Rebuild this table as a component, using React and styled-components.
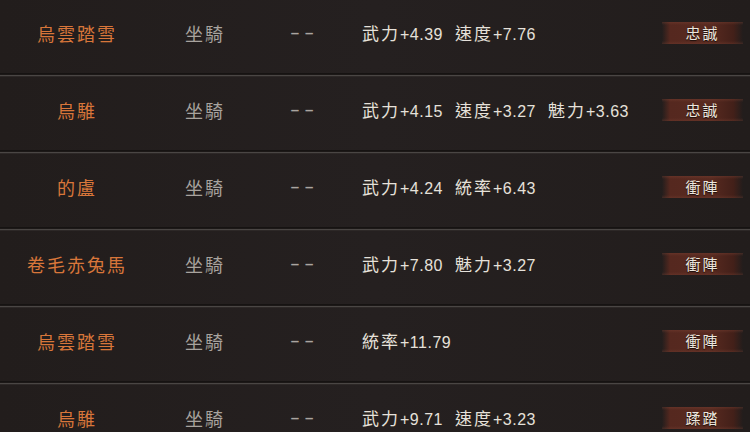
import React from "react";
import styled, { createGlobalStyle } from "styled-components";

const Global = createGlobalStyle`
  html, body { margin: 0; padding: 0; background: #231e1d; }
  body { width: 750px; height: 432px; overflow: hidden; }
`;

const CJK = `"Noto Sans CJK TC", "Noto Sans CJK SC", sans-serif`;
const LATIN = `"Liberation Sans", Arial, "Noto Sans CJK TC", sans-serif`;

const Page = styled.div`
  width: 750px;
  height: 432px;
  overflow: hidden;
  background: linear-gradient(90deg, #221d1c 0%, #252020 50%, #221d1c 100%);
`;

const List = styled.div`
  display: flex;
  flex-direction: column;
`;

const Row = styled.div`
  height: 73px;
  box-sizing: border-box;
  padding: 0 7px 8px 0;
  display: grid;
  grid-template-columns: 152px 104px 92px 1fr 81px;
  align-items: center;
`;

const Divider = styled.div`
  height: 4px;
  background: linear-gradient(
    180deg,
    #161312 0px,
    #161312 1px,
    #1c1817 1px,
    #1c1817 2px,
    #4a4644 2px,
    #4a4644 3px,
    #2d2827 3px,
    #2d2827 4px
  );
`;

const Name = styled.div`
  font-family: ${CJK};
  font-size: 18px;
  letter-spacing: 2px;
  color: #d8763a;
  text-align: center;
  padding-left: 2px;
`;

const Type = styled.div`
  font-family: ${CJK};
  font-size: 18px;
  letter-spacing: 2px;
  color: #a8a39e;
  text-align: center;
  padding-left: 2px;
`;

const Dash = styled.div`
  font-family: ${LATIN};
  font-size: 15px;
  font-weight: bold;
  letter-spacing: 6px;
  color: #aaa5a0;
  text-align: center;
  padding-left: 6px;
`;

const Stats = styled.div`
  padding-left: 14px;
  display: flex;
  gap: 12px;
  color: #e6e1da;
  white-space: nowrap;
`;

const Stat = styled.span`
  display: inline-flex;
  align-items: baseline;
`;

const StatName = styled.span`
  font-family: ${CJK};
  font-size: 17px;
  letter-spacing: 2px;
`;

const StatValue = styled.span`
  font-family: ${LATIN};
  font-size: 16px;
  letter-spacing: 0.5px;
`;

const Badge = styled.div`
  height: 22px;
  display: flex;
  align-items: center;
  justify-content: center;
  font-family: ${CJK};
  font-size: 15px;
  letter-spacing: 2px;
  color: #ece6de;
  text-shadow: 0 1px 1px #1a0e0a;
  background:
    linear-gradient(180deg, rgba(130, 70, 55, 0.35) 0px, rgba(0,0,0,0) 3px, rgba(0,0,0,0) 19px, rgba(130, 70, 55, 0.3) 22px),
    linear-gradient(90deg, rgba(80, 38, 28, 0) 0%, #55281f 10%, #582a20 60%, #432019 88%, rgba(50, 26, 22, 0) 100%);
`;

const rows = [
  { name: "烏雲踏雪", stats: [["武力", "+4.39"], ["速度", "+7.76"]], badge: "忠誠" },
  { name: "烏騅", stats: [["武力", "+4.15"], ["速度", "+3.27"], ["魅力", "+3.63"]], badge: "忠誠" },
  { name: "的盧", stats: [["武力", "+4.24"], ["統率", "+6.43"]], badge: "衝陣" },
  { name: "卷毛赤兔馬", stats: [["武力", "+7.80"], ["魅力", "+3.27"]], badge: "衝陣" },
  { name: "烏雲踏雪", stats: [["統率", "+11.79"]], badge: "衝陣" },
  { name: "烏騅", stats: [["武力", "+9.71"], ["速度", "+3.23"]], badge: "蹂踏" },
];

export default function App() {
  return (
    <Page>
      <Global />
      <List>
        {rows.map((r, i) => (
          <React.Fragment key={i}>
            {i > 0 && <Divider />}
            <Row>
              <Name>{r.name}</Name>
              <Type>坐騎</Type>
              <Dash>––</Dash>
              <Stats>
                {r.stats.map(([n, v]) => (
                  <Stat key={n}>
                    <StatName>{n}</StatName>
                    <StatValue>{v}</StatValue>
                  </Stat>
                ))}
              </Stats>
              <Badge>{r.badge}</Badge>
            </Row>
          </React.Fragment>
        ))}
      </List>
    </Page>
  );
}
